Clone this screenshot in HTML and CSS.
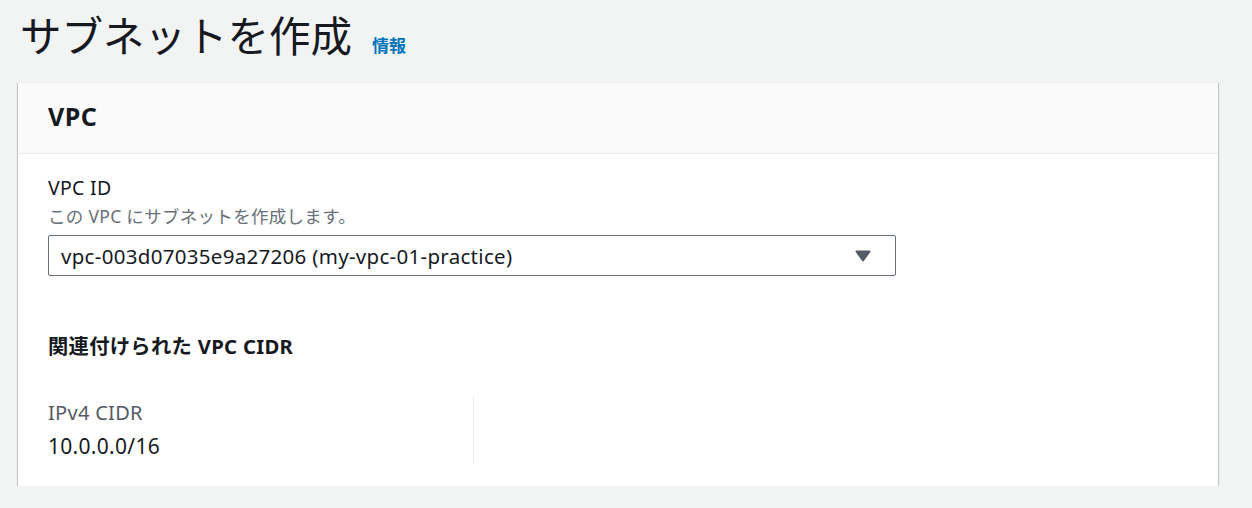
FILE: index.html
```html
<!DOCTYPE html>
<html lang="ja">
<head>
    <meta charset="utf-8">
    <title>サブネットを作成</title>
    <link rel="stylesheet" href="styles.css">
</head>
<body>
    <div class="page-header">
        <h1>サブネットを作成</h1>
        <a href="#" class="info-link">情報</a>
    </div>

    <!-- VPC panel -->
    <div class="panel">
        <div class="panel-header">
            <h2>VPC</h2>
        </div>
        <div class="panel-body">
            <div class="field">
                <label class="field-label">VPC ID</label>
                <div class="field-desc">この VPC にサブネットを作成します。</div>
                <div class="select">
                    <span>vpc-003d07035e9a27206 (my-vpc-01-practice)</span>
                    <svg class="caret" width="16" height="12" viewBox="0 0 16 12">
                        <path d="M1.5 1.5 L14.5 1.5 L8 10.5 Z" fill="#545b64" stroke="#545b64" stroke-width="2" stroke-linejoin="round"/>
                    </svg>
                </div>
            </div>

            <h3 class="sub-title">関連付けられた VPC CIDR</h3>

            <div class="cidr-grid">
                <div class="cidr-col">
                    <div class="cidr-key">IPv4 CIDR</div>
                    <div class="cidr-value">10.0.0.0/16</div>
                </div>
                <div class="cidr-col"></div>
            </div>
        </div>
    </div>
</body>
</html>
```

FILE: styles.css
```css
body {
    margin: 0;
    padding: 0 34px 0 18px;
    background-color: #f2f3f3;
    font-family: "Noto Sans", "Noto Sans CJK JP", sans-serif;
    color: #16191f;
}
.page-header {
    display: flex;
    align-items: baseline;
    gap: 20px;
    padding: 9px 0 0 2px;
    height: 72px;
    box-sizing: border-box;
}
.page-header h1 {
    margin: 0;
    font-size: 41.5px;
    font-weight: 400;
    line-height: 54px;
}
.info-link {
    color: #0073bb;
    font-size: 17px;
    font-weight: 700;
    text-decoration: none;
}
.panel {
    background: #fff;
    box-shadow: 0 1px 1px 0 rgba(0, 28, 36, 0.3), 1px 1px 1px 0 rgba(0, 28, 36, 0.15), -1px 1px 1px 0 rgba(0, 28, 36, 0.15);
    border-top: 1px solid #eaeded;
    margin-top: 10px;
}
.panel-header {
    background: #fafafa;
    border-bottom: 1px solid #eaeded;
    height: 71px;
    box-sizing: border-box;
    padding: 17px 30px 0;
}
.panel-header h2 {
    margin: 0;
    font-size: 25px;
    font-weight: 700;
    line-height: 32px;
    letter-spacing: 0.5px;
}
.panel-body {
    padding: 20px 30px 22px;
}
.field-label {
    display: block;
    font-size: 19.5px;
    line-height: 28px;
    letter-spacing: 0.3px;
}
.field-desc {
    font-size: 17.5px;
    color: #687078;
    line-height: 28px;
    margin-bottom: 5px;
    letter-spacing: 0.3px;
}
.select {
    width: 848px;
    height: 41px;
    box-sizing: border-box;
    border: 1px solid #687078;
    border-radius: 2px;
    display: flex;
    align-items: center;
    justify-content: space-between;
    padding: 0 24px 0 12px;
    font-size: 20.5px;
    letter-spacing: 0.3px;
}
.caret {
    display: block;
}
.sub-title {
    margin: 56px 0 0;
    font-size: 20.3px;
    font-weight: 700;
    line-height: 28px;
    letter-spacing: 0.3px;
}
.cidr-grid {
    display: grid;
    grid-template-columns: 425px 425px;
    margin-top: 36px;
}
.cidr-col {
    min-height: 66px;
}
.cidr-col + .cidr-col {
    border-left: 1px solid #eaeded;
}
.cidr-key {
    font-size: 20px;
    color: #545b64;
    line-height: 30px;
    margin-top: 2px;
    letter-spacing: 0.3px;
}
.cidr-value {
    font-size: 21px;
    line-height: 36px;
    letter-spacing: 0.3px;
}
```
